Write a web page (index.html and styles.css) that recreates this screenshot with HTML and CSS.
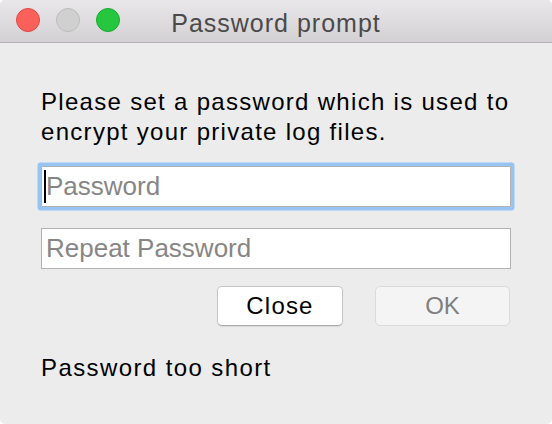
FILE: index.html
```html
<!DOCTYPE html>
<html>
<head>
<meta charset="utf-8">
<title>Password prompt</title>
<link rel="stylesheet" href="styles.css">
</head>
<body>
<div class="window">
  <div class="titlebar">
    <div class="lights">
      <span class="light red"></span>
      <span class="light gray"></span>
      <span class="light green"></span>
    </div>
    <div class="title">Password prompt</div>
  </div>
  <div class="content">
    <p class="message">Please set a password which is used to<br>encrypt your private log files.</p>
    <div class="field focused">
      <input class="input" type="password" placeholder="Password">
      <span class="caret"></span>
    </div>
    <div class="field">
      <input class="input" type="password" placeholder="Repeat Password">
    </div>
    <div class="buttons">
      <button class="btn close">Close</button>
      <button class="btn ok" disabled>OK</button>
    </div>
    <p class="status">Password too short</p>
  </div>
</div>
</body>
</html>
```

FILE: styles.css
```css
html, body {
  margin: 0;
  padding: 0;
  background: #ffffff;
}
.window {
  width: 552px;
  height: 424px;
  border-radius: 5px;
  overflow: hidden;
  background: #ececec;
  font-family: "Liberation Sans", Arial, sans-serif;
  display: flex;
  flex-direction: column;
}
.titlebar {
  position: relative;
  height: 42px;
  border-bottom: 1px solid #b4b2b4;
  background: linear-gradient(#e9e7e9, #d3d1d3);
  display: flex;
  align-items: center;
  justify-content: center;
}
.lights {
  position: absolute;
  left: 16px;
  top: 8px;
  display: flex;
  gap: 16px;
}
.light {
  width: 22px;
  height: 22px;
  border-radius: 50%;
  border: 1px solid transparent;
  display: block;
}
.light.red { background: #fc605b; border-color: #df4a45; }
.light.gray { background: #d0d0d0; border-color: #bdbdbd; }
.light.green { background: #27c63f; border-color: #1ba92d; }
.title {
  font-size: 25px;
  letter-spacing: 1px;
  color: #4a4a4a;
  padding-top: 3px;
  line-height: 40px;
}
.content {
  padding: 44px 41px 0 41px;
  display: flex;
  flex-direction: column;
}
.message {
  margin: 0;
  font-size: 24px;
  line-height: 30px;
  letter-spacing: 1.3px;
  white-space: nowrap;
  color: #000;
}
.field {
  position: relative;
  height: 41px;
  box-sizing: border-box;
  border: 1px solid #b3b3b3;
  background: #fff;
  margin-top: 19px;
}
.field + .field {
  margin-top: 21px;
}
.field.focused {
  border-radius: 1px;
  box-shadow: 0 0 0 3.5px #96c4f4;
}
.input {
  width: 100%;
  height: 100%;
  box-sizing: border-box;
  border: 0;
  outline: none;
  background: transparent;
  padding: 0 0 0 4px;
  font-family: "Liberation Sans", Arial, sans-serif;
  font-size: 26px;
  color: #000;
  caret-color: transparent;
}
.input::placeholder {
  color: #868686;
  opacity: 1;
}
.caret {
  position: absolute;
  left: 2px;
  top: 3px;
  width: 2px;
  height: 33px;
  background: #000;
}
.buttons {
  display: flex;
  justify-content: flex-end;
  gap: 32px;
  margin-top: 17px;
  padding-right: 1px;
}
.btn {
  height: 40px;
  box-sizing: border-box;
  border-radius: 5px;
  font-family: "Liberation Sans", Arial, sans-serif;
  font-size: 24px;
  padding: 0;
  line-height: 38px;
}
.btn.close {
  width: 126px;
  background: #ffffff;
  border: 1px solid #c6c6c6;
  border-bottom-color: #a9a9a9;
  color: #000;
  letter-spacing: 1.2px;
  box-shadow: 0 1px 1px rgba(0,0,0,0.08);
}
.btn.ok {
  width: 135px;
  background: #f4f4f4;
  border: 1px solid #dadada;
  color: #7f7f7f;
}
.status {
  margin: 27px 0 0 0;
  font-size: 24px;
  line-height: 30px;
  letter-spacing: 1.4px;
  color: #000;
}
```
